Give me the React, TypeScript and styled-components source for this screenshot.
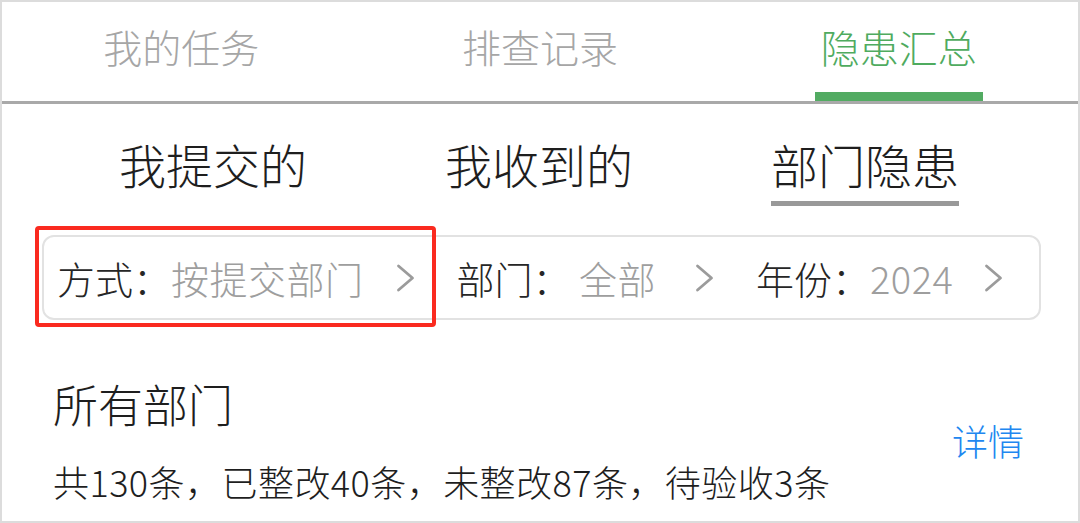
import React from "react";
import styled, { createGlobalStyle } from "styled-components";

const Global = createGlobalStyle`
  html, body { margin: 0; padding: 0; background: #fff; }
  body { font-family: "Noto Sans CJK SC", "Noto Sans", sans-serif; font-weight: 300; }
  * { box-sizing: border-box; }
`;

const Frame = styled.div`
  width: 1080px;
  height: 523px;
  border: 2px solid #dcdcdc;
  background: #fff;
  display: flex;
  flex-direction: column;
  overflow: hidden;
`;

const TabBar = styled.div`
  display: grid;
  grid-template-columns: repeat(3, 1fr);
  height: 102px;
  border-bottom: 3px solid #a9a9a9;
`;

const Tab = styled.div<{ $active?: boolean }>`
  display: flex;
  flex-direction: column;
  align-items: center;
  padding-top: 24px;
  font-size: 39px;
  line-height: 40px;
  color: ${(p) => (p.$active ? "#4fab5f" : "#a6a6a6")};
`;

const Indicator = styled.div`
  margin-top: auto;
  width: 168px;
  height: 9px;
  background: #52ab62;
`;

const SubTabs = styled.div`
  display: grid;
  grid-template-columns: repeat(3, 326px);
  justify-content: center;
  padding-top: 36px;
  margin-left: -2px;
`;

const SubTab = styled.div`
  display: flex;
  justify-content: center;
`;

const SubLabel = styled.span<{ $active?: boolean }>`
  font-size: 47px;
  line-height: 48px;
  color: #1e1e1e;
  padding-bottom: 13px;
  border-bottom: 5px solid ${(p) => (p.$active ? "#999" : "transparent")};
`;

const FilterWrap = styled.div`
  position: relative;
  margin: 29px 37px 0 40px;
`;

const FilterBar = styled.div`
  height: 85px;
  border: 2px solid #e2e2e2;
  border-radius: 12px;
  display: flex;
  align-items: center;
  padding-left: 13px;
  gap: 42px;
`;

const FilterItem = styled.div`
  display: flex;
  align-items: center;
  font-size: 38px;
  line-height: 40px;
`;

const Label = styled.span`
  color: #262626;
  white-space: pre;
`;

const Value = styled.span`
  color: #9e9e9e;
  letter-spacing: 0.5px;
`;

const Arrow = styled.svg<{ $gap: number }>`
  margin-left: ${(p) => p.$gap}px;
  flex-shrink: 0;
`;

const Highlight = styled.div`
  position: absolute;
  left: -7px;
  top: -9px;
  width: 401px;
  height: 101px;
  border: 4px solid #fa2a1f;
  border-radius: 4px;
  pointer-events: none;
`;

const Summary = styled.div`
  display: flex;
  align-items: center;
  justify-content: space-between;
  margin-top: 61px;
  padding: 0 54px 0 51px;
`;

const SummaryText = styled.div`
  display: flex;
  flex-direction: column;
`;

const Title = styled.div`
  font-size: 45px;
  line-height: 46px;
  color: #1e1e1e;
  margin-bottom: 36px;
`;

const Stats = styled.div`
  font-size: 36px;
  line-height: 36px;
  color: #1e1e1e;
  letter-spacing: 0.45px;
`;

const Detail = styled.span`
  font-size: 36px;
  line-height: 36px;
  color: #2187f0;
`;

const Chevron = ({ gap }: { gap: number }) => (
  <Arrow $gap={gap} width="19" height="28" viewBox="0 0 19 28">
    <path d="M2.5 2 L16.5 14 L2.5 26" fill="none" stroke="#9b9b9b" strokeWidth="2.8" strokeLinecap="round" strokeLinejoin="round" />
  </Arrow>
);

const filters = [
  { label: "方式：", value: "按提交部门", gap: 32 },
  { label: "部门： ", value: "全部", gap: 39 },
  { label: "年份：", value: "2024", gap: 31 },
];

export default function App() {
  return (
    <>
      <Global />
      <Frame>
        <TabBar>
          <Tab>我的任务</Tab>
          <Tab>排查记录</Tab>
          <Tab $active>
            隐患汇总
            <Indicator />
          </Tab>
        </TabBar>
        <SubTabs>
          <SubTab><SubLabel>我提交的</SubLabel></SubTab>
          <SubTab><SubLabel>我收到的</SubLabel></SubTab>
          <SubTab><SubLabel $active>部门隐患</SubLabel></SubTab>
        </SubTabs>
        <FilterWrap>
          <FilterBar>
            {filters.map((f) => (
              <FilterItem key={f.label}>
                <Label>{f.label}</Label>
                <Value>{f.value}</Value>
                <Chevron gap={f.gap} />
              </FilterItem>
            ))}
          </FilterBar>
          <Highlight />
        </FilterWrap>
        <Summary>
          <SummaryText>
            <Title>所有部门</Title>
            <Stats>共130条，已整改40条，未整改87条，待验收3条</Stats>
          </SummaryText>
          <Detail>详情</Detail>
        </Summary>
      </Frame>
    </>
  );
}
